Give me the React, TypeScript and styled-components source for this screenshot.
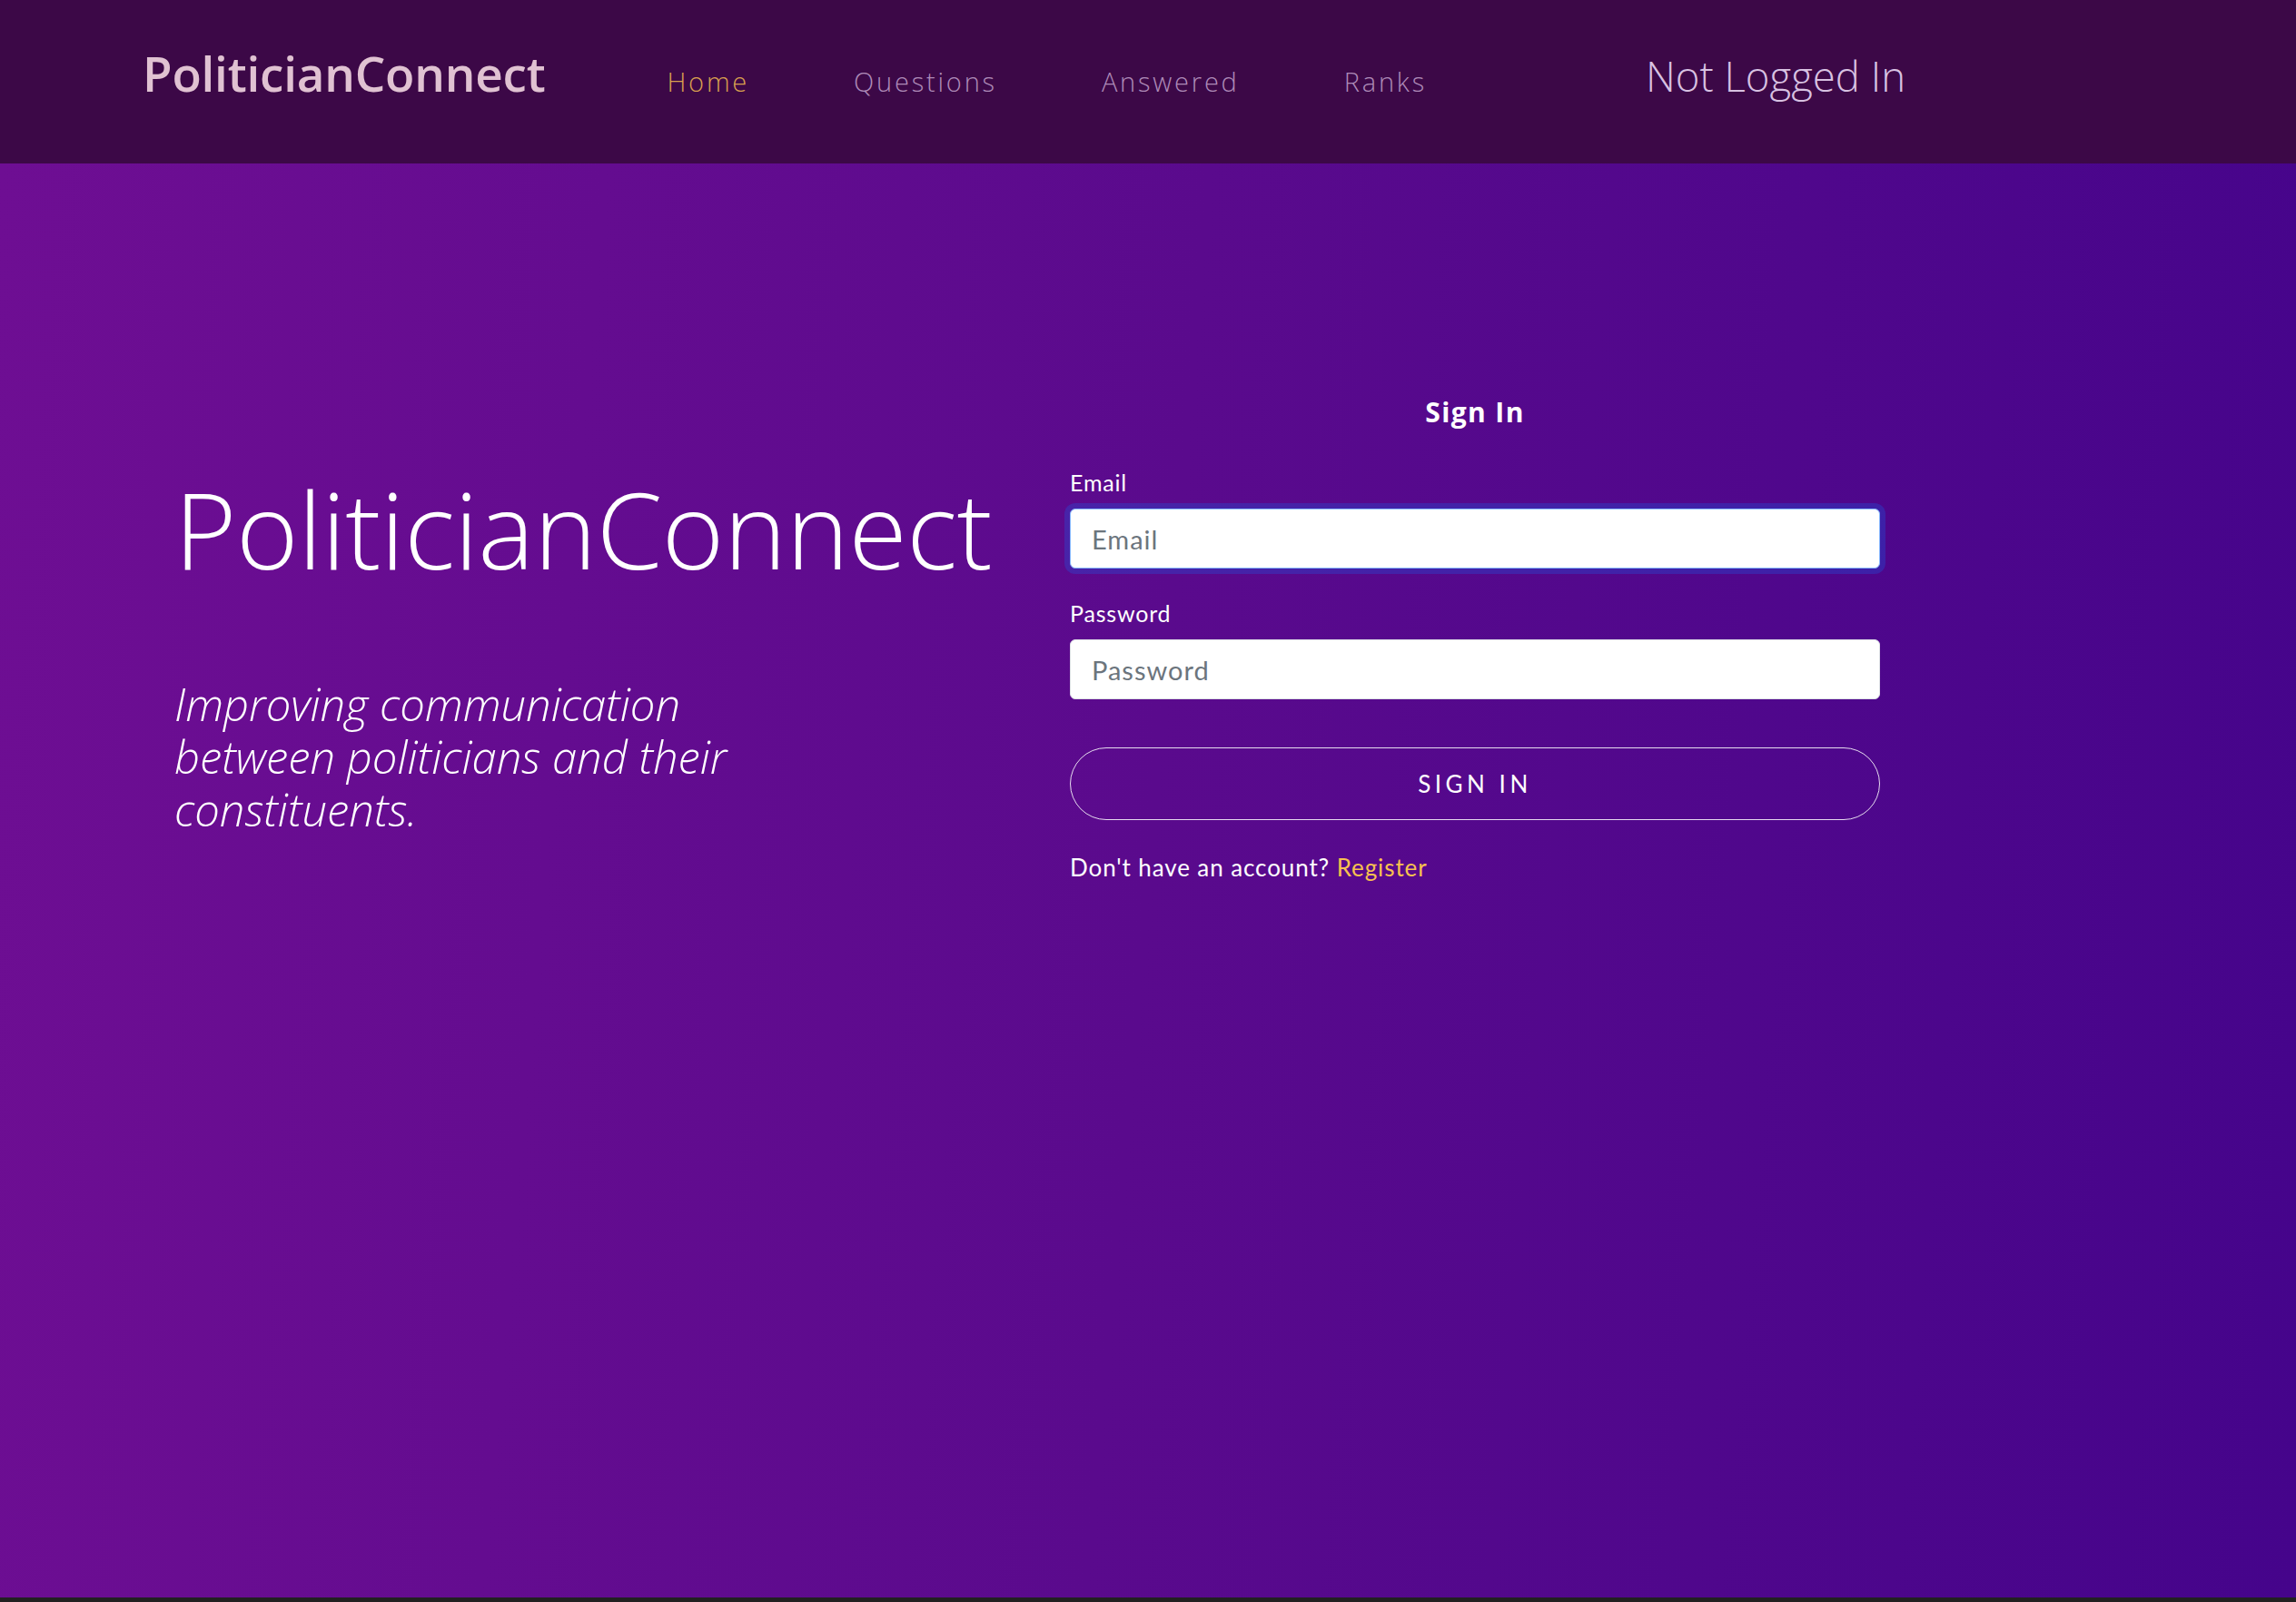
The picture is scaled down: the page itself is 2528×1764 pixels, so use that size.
import styled, { createGlobalStyle } from 'styled-components';

const GlobalStyle = createGlobalStyle`
  html, body {
    margin: 0;
    padding: 0;
    background-color: #212121;
  }
  * {
    box-sizing: border-box;
  }
`;

const navLinks = ['Home', 'Questions', 'Answered', 'Ranks'];

function App() {
  return (
    <>
      <GlobalStyle />
      <Page>
        <Header>
          <Logo>PoliticianConnect</Logo>
          <Nav>
            {navLinks.map((link) => (
              <NavLink key={link} active={link === 'Home'}>
                {link}
              </NavLink>
            ))}
          </Nav>
          <Status>Not Logged In</Status>
        </Header>
        <Main>
          <Intro>
            <Title>PoliticianConnect</Title>
            <Tagline>
              Improving communication between politicians and their constituents.
            </Tagline>
          </Intro>
          <Form onSubmit={(e) => e.preventDefault()}>
            <FormTitle>Sign In</FormTitle>
            <Label htmlFor='email'>Email</Label>
            <Input id='email' type='email' placeholder='Email' focused />
            <Label htmlFor='password' spaced>
              Password
            </Label>
            <Input id='password' type='password' placeholder='Password' />
            <SubmitButton type='submit'>Sign In</SubmitButton>
            <Footnote>
              Don't have an account? <RegisterLink href='#'>Register</RegisterLink>
            </Footnote>
          </Form>
        </Main>
      </Page>
    </>
  );
}

const Page = styled.div`
  display: flex;
  flex-direction: column;
  min-height: 1759px;
`;

const Header = styled.header`
  display: flex;
  align-items: baseline;
  height: 180px;
  padding: 49px 0 0 157px;
  background-color: #3c0847;
`;

const Logo = styled.div`
  font-family: 'Open Sans', sans-serif;
  font-weight: 600;
  font-size: 53px;
  line-height: 1.2;
  letter-spacing: -0.2px;
  color: #e0c2d2;
  margin-right: 134px;
`;

const Nav = styled.nav`
  display: flex;
  gap: 115px;
`;

const NavLink = styled.a<{ active?: boolean }>`
  font-family: 'Open Sans', sans-serif;
  font-weight: 300;
  font-size: 29px;
  line-height: 1.2;
  letter-spacing: 2.8px;
  color: ${(props) => (props.active ? '#d9a04f' : '#ae8bb8')};
  cursor: pointer;
`;

const Status = styled.div`
  font-family: 'Open Sans', sans-serif;
  font-weight: 300;
  font-size: 45.5px;
  color: #d8c2e2;
  margin-left: 241px;
`;

const Main = styled.main`
  flex: 1;
  display: flex;
  padding-left: 192px;
  background: linear-gradient(95deg, #6e0e93 0%, #5a0a8d 50%, #45048b 100%);
`;

const Intro = styled.section`
  width: 986px;
  padding-top: 332px;
  color: #fff;
`;

const Title = styled.h1`
  margin: 0;
  font-family: 'Open Sans', sans-serif;
  font-weight: 300;
  font-size: 117px;
  line-height: 139px;
  letter-spacing: -0.4px;
`;

const Tagline = styled.p`
  margin: 95px 0 0;
  max-width: 670px;
  font-family: 'Open Sans', sans-serif;
  font-style: italic;
  font-weight: 300;
  font-size: 49px;
  line-height: 58px;
`;

const Form = styled.form`
  display: flex;
  flex-direction: column;
  width: 892px;
  padding-top: 256px;
  font-family: Lato, 'Open Sans', sans-serif;
  color: #fff;
`;

const FormTitle = styled.h2`
  margin: 0 0 44px;
  text-align: center;
  font-family: 'Open Sans', sans-serif;
  font-weight: 700;
  font-size: 30px;
  line-height: 36px;
  letter-spacing: 1.4px;
`;

const Label = styled.label<{ spaced?: boolean }>`
  margin-top: ${(props) => (props.spaced ? '34px' : '0')};
  margin-bottom: 14px;
  font-size: 25px;
  line-height: 30px;
  letter-spacing: 0.8px;
`;

const Input = styled.input<{ focused?: boolean }>`
  height: 66px;
  padding: 0 23px;
  border: 1px solid ${(props) => (props.focused ? '#86b7fe' : '#dee2e6')};
  border-radius: 6px;
  background-color: #fff;
  font-family: Lato, sans-serif;
  font-size: 29px;
  letter-spacing: 1px;
  color: #212529;
  outline: none;
  box-shadow: ${(props) =>
    props.focused ? '0 0 0 6px rgba(13, 110, 253, 0.25)' : 'none'};

  &::placeholder {
    color: #6c757d;
  }
`;

const SubmitButton = styled.button`
  margin-top: 53px;
  height: 80px;
  border: 1.5px solid #e6dcef;
  border-radius: 40px;
  background: transparent;
  color: #fff;
  font-family: Lato, sans-serif;
  font-size: 26px;
  letter-spacing: 4.5px;
  text-transform: uppercase;
  cursor: pointer;
`;

const Footnote = styled.p`
  margin: 37px 0 0;
  font-size: 26px;
  line-height: 30px;
  letter-spacing: 0.9px;
`;

const RegisterLink = styled.a`
  color: #f7c14f;
  text-decoration: none;
`;

export default App;
